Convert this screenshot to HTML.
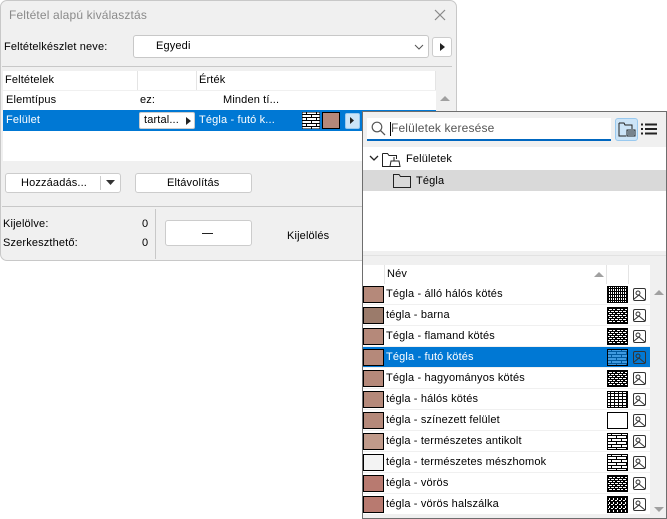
<!DOCTYPE html>
<html><head><meta charset="utf-8"><style>
*{box-sizing:border-box;margin:0;padding:0}
body{width:667px;height:519px;background:#fff;position:relative;overflow:hidden;font-family:"Liberation Sans",sans-serif;font-size:11px;color:#000;letter-spacing:0.15px}
.a{position:absolute}
.t{position:absolute;white-space:nowrap;line-height:13px}
.btn{position:absolute;background:#fff;border:1px solid #ccc;border-radius:3px;text-align:center}
.sw{position:absolute;width:21px;height:17px;border:1px solid #000}
.pt{position:absolute;width:21px;height:17px}
.im{position:absolute;width:13px;height:13px}
</style></head><body>
<svg width="0" height="0" style="position:absolute"><defs>
<pattern id="br" width="8" height="4" patternUnits="userSpaceOnUse"><rect width="8" height="4" fill="#000"/><rect x="0" y="0" width="3" height="1" fill="#fff"/><rect x="4" y="0" width="3" height="1" fill="#fff"/><rect x="2" y="2" width="3" height="1" fill="#fff"/><rect x="6" y="2" width="2" height="1" fill="#fff"/></pattern>
<pattern id="vg" width="2" height="3" patternUnits="userSpaceOnUse"><rect width="2" height="3" fill="#000"/><rect width="1" height="2" fill="#fff"/></pattern>
<pattern id="gr" width="4" height="3" patternUnits="userSpaceOnUse"><rect width="4" height="3" fill="#000"/><rect width="3" height="2" fill="#fff"/></pattern>
<pattern id="bw" width="10" height="6" patternUnits="userSpaceOnUse"><rect width="10" height="6" fill="#fff"/><rect y="2" width="10" height="1" fill="#000"/><rect y="5" width="10" height="1" fill="#000"/><rect x="4" y="0" width="1" height="3" fill="#000"/><rect x="9" y="3" width="1" height="3" fill="#000"/></pattern>
<pattern id="hz" width="4" height="4" patternUnits="userSpaceOnUse"><rect width="4" height="4" fill="#000"/><rect width="2" height="1" fill="#fff"/><rect x="2" y="2" width="1" height="2" fill="#fff"/></pattern>
</defs></svg>

<div class="a" style="left:0;top:0;width:457px;height:261px;background:#f0f0f0;border:1px solid #c8c8c8;border-radius:7px"></div>
<div class="t" style="left:9px;top:9px;font-size:12px;color:#8a8a8a">Feltétel alapú kiválasztás</div>
<svg class="a" style="left:434px;top:9px" width="12" height="12"><path d="M1 1L11 11M11 1L1 11" stroke="#888" stroke-width="1.2"/></svg>
<div class="t" style="left:4px;top:41px">Feltételkészlet neve:</div>
<div class="a" style="left:133px;top:35px;width:296px;height:23px;background:#fff;border:1px solid #c8c8c8;border-radius:3px"></div>
<div class="t" style="left:156px;top:40px">Egyedi</div>
<svg class="a" style="left:414px;top:44px" width="10" height="6"><path d="M1 1L5 5L9 1" stroke="#555" fill="none"/></svg>
<div class="btn" style="left:432px;top:37px;width:20px;height:20px"></div>
<svg class="a" style="left:440px;top:43px" width="5" height="8"><path d="M0 0L5 4L0 8Z" fill="#222"/></svg>
<div class="a" style="left:2px;top:66px;width:450px;height:1px;background:#c8c8c8"></div>
<div class="a" style="left:3px;top:71px;width:433px;height:90px;background:#fff"></div>
<div class="a" style="left:3px;top:90px;width:433px;height:1px;background:#f0f0f0"></div>
<div class="a" style="left:137px;top:71px;width:1px;height:19px;background:#e4e4e4"></div>
<div class="a" style="left:196px;top:71px;width:1px;height:19px;background:#e4e4e4"></div>
<div class="a" style="left:435px;top:71px;width:1px;height:19px;background:#e4e4e4"></div>
<div class="t" style="left:5px;top:74px">Feltételek</div>
<div class="t" style="left:199px;top:74px">Érték</div>
<div class="t" style="left:6px;top:94px">Elemtípus</div>
<div class="t" style="left:140px;top:94px">ez:</div>
<div class="t" style="left:223px;top:94px">Minden tí...</div>
<svg class="a" style="left:440px;top:95px" width="10" height="7"><path d="M0 6L5 1L10 6Z" fill="#a0a0a0"/></svg>
<div class="a" style="left:3px;top:110px;width:433px;height:21px;background:#0078d4"></div>
<div class="t" style="left:6px;top:114px;color:#fff">Felület</div>
<div class="a" style="left:139px;top:112px;width:56px;height:17px;background:#fff;border:1px solid #ccc;border-radius:2px"></div>
<div class="t" style="left:144px;top:114px">tartal...</div>
<svg class="a" style="left:186px;top:117px" width="5" height="8"><path d="M0 0L5 4L0 8Z" fill="#222"/></svg>
<div class="t" style="left:199px;top:114px;color:#fff">Tégla - futó k...</div>
<svg class="pt" style="left:302px;top:112px;width:18px;height:17px"><rect width="18" height="17" fill="url(#bw)" stroke="#000"/></svg>
<div class="a" style="left:322px;top:112px;width:18px;height:17px;background:#b5887a;border:1px solid #000"></div>
<div class="a" style="left:345px;top:113px;width:15px;height:16px;background:#cce4f7;border:1px solid #99c9ef;border-radius:2px"></div>
<svg class="a" style="left:350px;top:117px" width="4" height="7"><path d="M0 0L4 3.5L0 7Z" fill="#222"/></svg>
<div class="btn" style="left:5px;top:173px;width:116px;height:20px"></div>
<div class="t" style="left:21px;top:177px">Hozzáadás...</div>
<div class="a" style="left:100px;top:176px;width:1px;height:14px;background:#ccc"></div>
<svg class="a" style="left:106px;top:180px" width="9" height="5"><path d="M0 0L9 0L4.5 5Z" fill="#333"/></svg>
<div class="btn" style="left:135px;top:173px;width:117px;height:20px"></div>
<div class="t" style="left:167px;top:177px">Eltávolítás</div>
<div class="a" style="left:2px;top:206px;width:360px;height:1px;background:#c8c8c8"></div>
<div class="a" style="left:155px;top:209px;width:1px;height:50px;background:#c8c8c8"></div>
<div class="t" style="left:3px;top:218px">Kijelölve:</div>
<div class="t" style="left:142px;top:218px">0</div>
<div class="t" style="left:3px;top:237px">Szerkeszthető:</div>
<div class="t" style="left:142px;top:237px">0</div>
<div class="btn" style="left:165px;top:220px;width:87px;height:26px"></div>
<div class="a" style="left:202px;top:233px;width:11px;height:1px;background:#222"></div>
<div class="t" style="left:287px;top:230px">Kijelölés</div>

<div class="a" style="left:362px;top:111px;width:305px;height:408px;background:#f0f0f0;border:1px solid #6e6e6e"></div>
<div class="a" style="left:367px;top:118px;width:244px;height:23px;background:#fff;border-bottom:2px solid #0067c0"></div>
<svg class="a" style="left:371px;top:121px" width="15" height="15"><circle cx="6" cy="6" r="4.8" stroke="#555" fill="none" stroke-width="1.2"/><path d="M9.5 9.5L14 14" stroke="#555" stroke-width="1.3"/></svg>
<div class="a" style="left:390px;top:122px;width:1px;height:14px;background:#000"></div>
<div class="t" style="left:391px;top:122px;color:#555;font-size:12px">Felületek keresése</div>
<div class="a" style="left:615px;top:118px;width:23px;height:23px;background:#cce4f7;border:1px solid #99c9ef;border-radius:3px"></div>
<svg class="a" style="left:618px;top:121px" width="18" height="17"><path d="M1 2H6L7 4H14V8M1 2V15H8" stroke="#222" fill="none"/><rect x="9" y="9" width="8" height="6" fill="none" stroke="#222"/><path d="M10 11H16M10 13H16" stroke="#222"/></svg>
<svg class="a" style="left:641px;top:123px" width="16" height="12"><path d="M0 1.5H2M4 1.5H16M0 6H2M4 6H16M0 10.5H2M4 10.5H16" stroke="#222" stroke-width="2"/></svg>
<div class="a" style="left:363px;top:147px;width:303px;height:104px;background:#fff"></div>
<svg class="a" style="left:369px;top:155px" width="10" height="7"><path d="M1 1L5 5L9 1" stroke="#222" fill="none" stroke-width="1.3"/></svg>
<svg class="a" style="left:382px;top:151px" width="20" height="17"><path d="M0.5 2.5H5.5L7 4.5H14.5V8M0.5 2.5V15.5H8" stroke="#222" fill="none"/><path d="M12 6V10M9 10H17L18 15.5H8Z" stroke="#222" fill="none"/></svg>
<div class="t" style="left:406px;top:153px">Felületek</div>
<div class="a" style="left:363px;top:170px;width:303px;height:21px;background:#d9d9d9"></div>
<svg class="a" style="left:393px;top:173px" width="18" height="15"><path d="M0.5 1.5H6L7.5 3.5H17.5V14.5H0.5Z" stroke="#222" fill="none"/></svg>
<div class="t" style="left:416px;top:175px">Tégla</div>
<div class="a" style="left:363px;top:255px;width:303px;height:1px;background:#e2e2e2"></div>
<div class="a" style="left:363px;top:265px;width:287px;height:19px;background:#fff"></div>
<div class="a" style="left:384px;top:265px;width:1px;height:19px;background:#e4e4e4"></div>
<div class="a" style="left:606px;top:265px;width:1px;height:19px;background:#e4e4e4"></div>
<div class="a" style="left:628px;top:265px;width:1px;height:19px;background:#e4e4e4"></div>
<div class="t" style="left:387px;top:268px">Név</div>
<svg class="a" style="left:594px;top:271px" width="10" height="6"><path d="M0 6L5 1L10 6Z" fill="#a0a0a0"/></svg>
<svg class="a" style="left:654px;top:289px" width="10" height="7"><path d="M0 6L5 1L10 6Z" fill="#a0a0a0"/></svg>
<svg class="a" style="left:654px;top:506px" width="10" height="7"><path d="M0 1L5 6L10 1Z" fill="#a0a0a0"/></svg>

<div id="rows"></div>
<script>
var d=[["Tégla - álló hálós kötés","#b5897a","vg"],["tégla - barna","#9b7b6b","br"],["Tégla - flamand kötés","#b5897a","br"],["Tégla - futó kötés","#b5897a","bw",1],["Tégla - hagyományos kötés","#b5897a","br"],["tégla - hálós kötés","#b5897a","gr"],["tégla - színezett felület","#b5897a","none"],["tégla - természetes antikolt","#c09a8a","bw"],["tégla - természetes mészhomok","#f3f3f3","bw"],["tégla - vörös","#b87a70","br"],["tégla - vörös halszálka","#b87a70","hz"]];
var h="";
d.forEach(function(r,i){var y=284+i*21;
var sel=r[3];
h+='<div class="a" style="left:363px;top:'+y+'px;width:287px;height:21px;background:'+(sel?'#0078d4':'#fff')+';border-bottom:1px solid #f0f0f0"></div>';
h+='<div class="sw" style="left:363px;top:'+(y+2)+'px;background:'+r[1]+'"></div>';
h+='<div class="t" style="left:386px;top:'+(y+4)+'px;'+(sel?'color:#fff':'')+'">'+r[0]+'</div>';
var fill=r[2]=="none"?"#fff":"url(#"+r[2]+")";
if(sel)fill="url(#bw)";
h+='<svg class="pt" style="left:607px;top:'+(y+2)+'px"><rect x=".5" y=".5" width="20" height="16" fill="'+fill+'" stroke="#000"/>'+(sel?'<rect x="1" y="1" width="19" height="15" fill="#0078d4" opacity=".75"/>':'')+'</svg>';
h+='<svg class="im" style="left:633px;top:'+(y+4)+'px"><rect x=".5" y=".5" width="12" height="12" rx="1.5" fill="none" stroke="#333"/><circle cx="5" cy="5" r="2" fill="none" stroke="#333"/><path d="M1 11L6 7L12 12" stroke="#333" fill="none"/></svg>';
});
document.getElementById("rows").innerHTML=h;
</script>
</body></html>
